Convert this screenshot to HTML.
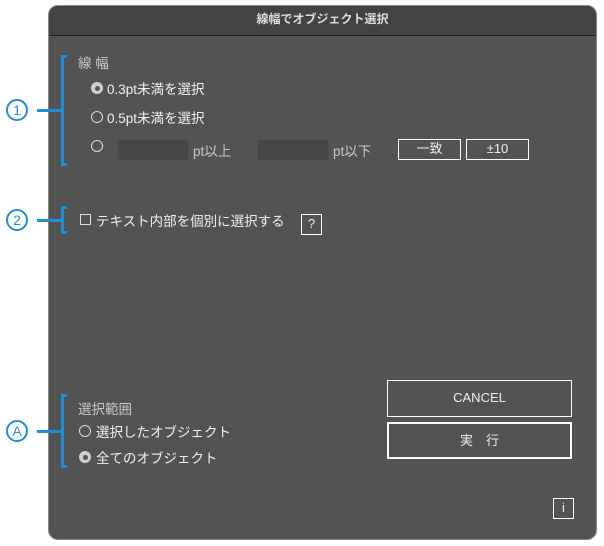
<!DOCTYPE html>
<html><head><meta charset="utf-8"><style>
body{margin:0;width:604px;height:546px;background:#fff;position:relative;overflow:hidden;font-family:"Liberation Sans","Noto Sans CJK JP",sans-serif;}
.a{position:absolute;}
.dlg{left:48px;top:5px;width:549px;height:535px;background:#535353;border-radius:10px;border:1px solid #8a8a8a;box-sizing:border-box;overflow:hidden}
.tb{left:0;top:0;width:100%;height:29px;background:#434343;border-bottom:1px solid #1e1e1e;color:#ddd;font-size:12px;font-weight:bold;text-align:center;line-height:27px}
.t{color:#f0f0f0;font-size:13.5px;white-space:nowrap}
.l{color:#c8c8c8;font-size:13.5px;white-space:nowrap}
.r{width:10px;height:10px;border:1px solid #ddd;border-radius:50%;box-sizing:content-box}
.rs{width:12px;height:12px;background:#cfcfcf;border-radius:50%}
.rs:after{content:"";position:absolute;left:3.5px;top:3.5px;width:5px;height:5px;border-radius:50%;background:#555}
.btn{border:1.5px solid #fff;box-sizing:border-box;color:#eee;font-size:13px;text-align:center}
.inp{background:#474747;border:1px solid #4e4e4e;border-radius:2px}
.bl{background:#1e8fd6}
.circ{width:18px;height:18px;border:2px solid #1e8fd6;border-radius:50%;color:#1e8fd6;font-size:14px;text-align:center;line-height:18px}
</style></head><body>
<div class="a dlg">
<div class="a tb">線幅でオブジェクト選択</div>
</div>
<div class="a bl" style="left:61px;top:55px;width:3px;height:111px"></div>
<div class="a bl" style="left:61px;top:55px;width:6px;height:3px"></div>
<div class="a bl" style="left:61px;top:163px;width:6px;height:3px"></div>
<div class="a bl" style="left:37px;top:109px;width:24px;height:3px"></div>
<div class="a circ" style="left:6px;top:99px">1</div>

<div class="a bl" style="left:61px;top:206px;width:3px;height:28px"></div>
<div class="a bl" style="left:61px;top:206px;width:6px;height:3px"></div>
<div class="a bl" style="left:61px;top:231px;width:6px;height:3px"></div>
<div class="a bl" style="left:37px;top:219px;width:24px;height:3px"></div>
<div class="a circ" style="left:6px;top:209px">2</div>

<div class="a bl" style="left:61px;top:394px;width:3px;height:74px"></div>
<div class="a bl" style="left:61px;top:394px;width:6px;height:3px"></div>
<div class="a bl" style="left:61px;top:465px;width:6px;height:3px"></div>
<div class="a bl" style="left:37px;top:430px;width:24px;height:3px"></div>
<div class="a circ" style="left:6px;top:420px">A</div>

<div class="a l" style="left:78px;top:52px">線 幅</div>
<div class="a rs" style="left:91px;top:82px"></div>
<div class="a t" style="left:107px;top:78px">0.3pt未満を選択</div>
<div class="a r" style="left:91px;top:111px"></div>
<div class="a t" style="left:107px;top:107px">0.5pt未満を選択</div>
<div class="a r" style="left:91px;top:140px"></div>
<div class="a inp" style="left:117px;top:139px;width:70px;height:20px"></div>
<div class="a l" style="left:193px;top:140px">pt以上</div>
<div class="a inp" style="left:257px;top:139px;width:70px;height:20px"></div>
<div class="a l" style="left:333px;top:140px">pt以下</div>
<div class="a btn" style="left:398px;top:139px;width:63px;height:21px;line-height:18px">一致</div>
<div class="a btn" style="left:466px;top:139px;width:63px;height:21px;line-height:18px">±10</div>

<div class="a" style="left:80px;top:214px;width:9px;height:9px;border:1px solid #ddd"></div>
<div class="a t" style="left:96px;top:210px">テキスト内部を個別に選択する</div>
<div class="a btn" style="left:301px;top:214px;width:21px;height:21px;line-height:18px">?</div>

<div class="a l" style="left:78px;top:398px">選択範囲</div>
<div class="a r" style="left:79px;top:425px"></div>
<div class="a t" style="left:96px;top:421px">選択したオブジェクト</div>
<div class="a rs" style="left:79px;top:451px"></div>
<div class="a t" style="left:96px;top:447px">全てのオブジェクト</div>

<div class="a btn" style="left:387px;top:380px;width:185px;height:37px;line-height:34px;border-width:1px">CANCEL</div>
<div class="a btn" style="left:387px;top:422px;width:185px;height:37px;line-height:33px;border-width:2px">実　行</div>
<div class="a btn" style="left:553px;top:498px;width:21px;height:21px;line-height:18px;border-width:1px">i</div>
</body></html>
